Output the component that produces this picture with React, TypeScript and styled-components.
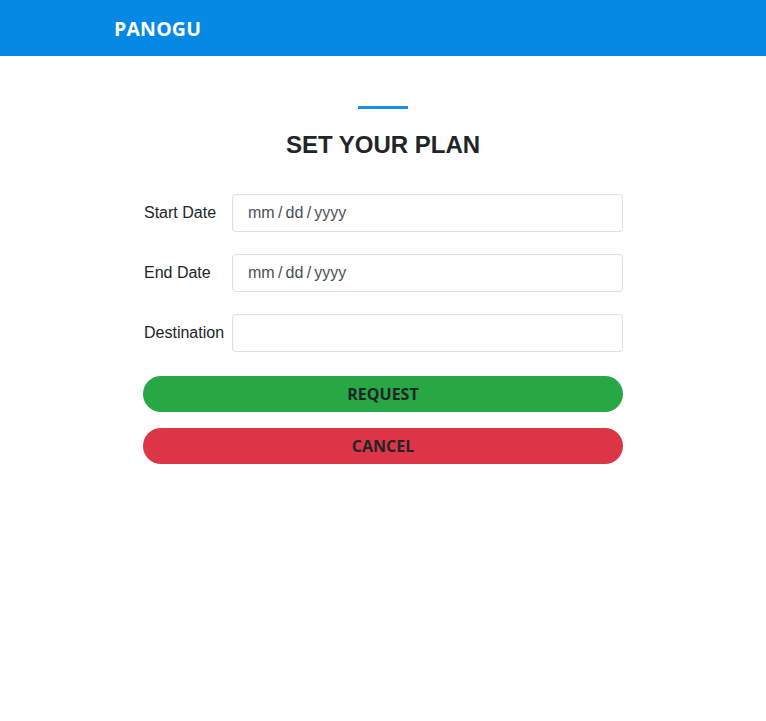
import styled, { createGlobalStyle } from "styled-components";

const GlobalStyle = createGlobalStyle`
  body {
    margin: 0;
    background: #fff;
    font-family: "Liberation Sans", Arial, sans-serif;
    color: #212529;
  }
`;

const Header = styled.header`
  height: 56px;
  background: #0589e4;
  display: flex;
  align-items: center;
  padding-left: 114px;
`;

const Brand = styled.span`
  font-family: "Open Sans", sans-serif;
  font-weight: 700;
  font-size: 19.5px;
  color: #fff;
  letter-spacing: 0.2px;
`;

const Main = styled.main`
  width: 480px;
  margin: 0 auto;
  padding-top: 50px;
  display: flex;
  flex-direction: column;
`;

const Accent = styled.div`
  width: 50px;
  height: 3px;
  background: #1790e5;
  align-self: center;
`;

const Title = styled.h1`
  margin: 22px 0 35px;
  text-align: center;
  font-family: "Liberation Sans", Arial, sans-serif;
  font-size: 24px;
  font-weight: 700;
  line-height: 28px;
  color: #212529;
`;

const Form = styled.form`
  display: flex;
  flex-direction: column;
  gap: 22px;
`;

const Row = styled.div`
  display: grid;
  grid-template-columns: 89px 1fr;
  align-items: center;
`;

const Label = styled.label`
  font-size: 16px;
  color: #212529;
  padding-left: 1px;
`;

const Input = styled.input`
  box-sizing: border-box;
  height: 38px;
  width: 100%;
  border: 1px solid #dcdfe3;
  border-radius: 4px;
  padding: 0 15px;
  font-family: "Liberation Sans", Arial, sans-serif;
  font-size: 16px;
  word-spacing: -1.2px;
  color: #495057;
  outline: none;
  &::placeholder {
    color: #495057;
  }
`;

const Actions = styled.div`
  display: flex;
  flex-direction: column;
  gap: 16px;
  margin-top: 2px;
`;

const PillButton = styled.button<{ $tone: string }>`
  height: 36px;
  width: 100%;
  border: none;
  border-radius: 18px;
  background: ${(p) => p.$tone};
  font-family: "Open Sans", sans-serif;
  font-weight: 700;
  font-size: 16px;
  color: #212529;
  cursor: pointer;
`;

export default function App() {
  return (
    <>
      <GlobalStyle />
      <Header>
        <Brand>PANOGU</Brand>
      </Header>
      <Main>
        <Accent />
        <Title>SET YOUR PLAN</Title>
        <Form onSubmit={(e) => e.preventDefault()}>
          <Row>
            <Label htmlFor="start">Start Date</Label>
            <Input id="start" type="text" placeholder="mm / dd / yyyy" />
          </Row>
          <Row>
            <Label htmlFor="end">End Date</Label>
            <Input id="end" type="text" placeholder="mm / dd / yyyy" />
          </Row>
          <Row>
            <Label htmlFor="dest">Destination</Label>
            <Input id="dest" type="text" />
          </Row>
          <Actions>
            <PillButton type="submit" $tone="#28a745">REQUEST</PillButton>
            <PillButton type="button" $tone="#dc3545">CANCEL</PillButton>
          </Actions>
        </Form>
      </Main>
    </>
  );
}
